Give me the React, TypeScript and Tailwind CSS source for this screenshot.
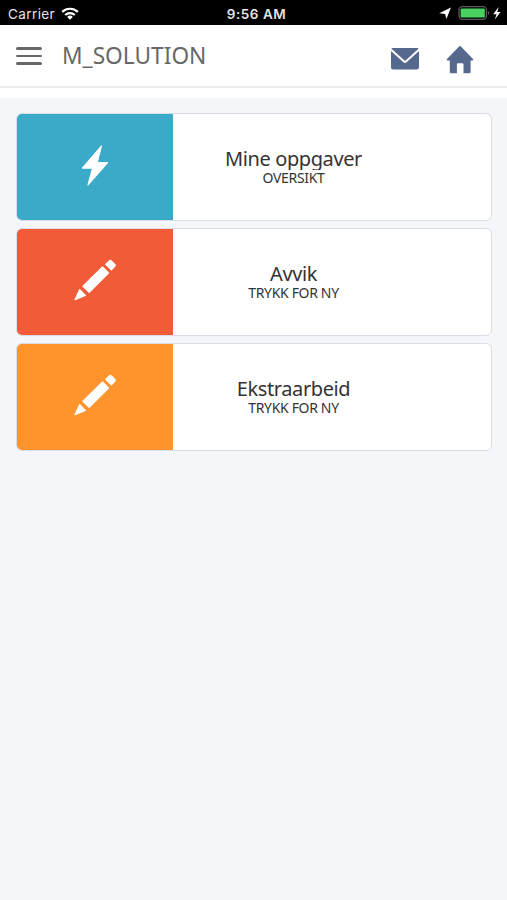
import React from "react";

type Tile = {
  title: string;
  subtitle: string;
  color: string;
  icon: "bolt" | "pencil";
};

const tiles: Tile[] = [
  { title: "Mine oppgaver", subtitle: "OVERSIKT", color: "bg-[#3ba9c8]", icon: "bolt" },
  { title: "Avvik", subtitle: "TRYKK FOR NY", color: "bg-[#f25b38]", icon: "pencil" },
  { title: "Ekstraarbeid", subtitle: "TRYKK FOR NY", color: "bg-[#ff932c]", icon: "pencil" },
];

function BoltIcon() {
  return (
    <svg width="44" height="44" viewBox="0 0 44 44" fill="#fff" stroke="#fff" strokeLinejoin="round" strokeWidth="1.2">
      <path d="M28.4 3.2 9.4 25.1H19.6L15 41.9 34.6 19.6H24.2Z" />
    </svg>
  );
}

function PencilIcon() {
  return (
    <svg width="44" height="44" viewBox="0 0 44 44" fill="#fff" stroke="#fff" strokeLinejoin="round" strokeWidth="1.2">
      <path d="M36.6 2.6Q37.3 2 38 2.6L42 6.6Q42.6 7.4 42 8.1L38.4 11.9 32.7 6.4Z" />
      <path d="M29.5 9 35.5 15 16.2 34.3 10 28.2Z" />
      <path d="M6.7 31.6 12.4 37.4 2 41.7Z" />
    </svg>
  );
}

function StatusBar() {
  return (
    <div className="flex h-[25px] items-center bg-black pt-[3px] text-[#e4e4e4]">
      <div className="flex flex-1 items-center gap-1.5 pl-2">
        <span className="pt-px text-[13.5px] leading-none tracking-[0.4px]">Carrier</span>
        <svg width="18" height="13" viewBox="0 0 18 13" fill="none" stroke="#fff" strokeWidth="2.2" className="-mt-0.5">
          <path d="M1.2 4.9a11.2 11.2 0 0 1 15.6 0" />
          <path d="M4.2 8a7 7 0 0 1 9.6 0" />
          <path d="M6.2 9.9a4.1 4.1 0 0 1 5.6 0L9 12.7Z" fill="#fff" stroke="none" />
        </svg>
      </div>
      <span className="pl-[3px] pt-px text-[13.5px] font-semibold leading-none tracking-[0.55px]">9:56 AM</span>
      <div className="flex flex-1 items-center justify-end pr-[5px]">
        <svg width="64" height="16" viewBox="0 0 64 16" className="-mt-px">
          <path d="M13 1.5 8.4 12.9 7.1 8 1.2 7.3Z" fill="#fff" />
          <rect x="21" y=".7" width="27.5" height="12.6" rx="3.5" fill="none" stroke="#59595d" strokeWidth="1.3" />
          <rect x="22.6" y="2.4" width="24.2" height="9.2" rx="1.2" fill="#48d15f" />
          <path d="M50 5c1.6.6 1.6 3.4 0 4Z" fill="#59595d" />
          <path d="M60.6 1 55.2 8.3H58.6L56.8 13.6 62.6 5.9H59.3Z" fill="#fff" />
        </svg>
      </div>
    </div>
  );
}

function Header() {
  return (
    <header className="flex h-[63px] items-center border-b-2 border-[#e9ebee] bg-white pl-4 pr-[33px]">
      <button aria-label="Menu" className="mt-px flex w-[26px] flex-col gap-[5px]">
        <span className="h-[2.5px] rounded-full bg-[#686868]" />
        <span className="h-[2.5px] rounded-full bg-[#686868]" />
        <span className="h-[2.5px] rounded-full bg-[#686868]" />
      </button>
      <h1 className="ml-5 flex-1 pt-0.5 text-[22.7px] leading-none text-[#686868]">M_SOLUTION</h1>
      <svg width="28" height="22" viewBox="0 0 28 22" fill="#54698d" className="mt-[7px]">
        <path d="M1.5 0H26.5Q27.4 0 27.5.8L14.8 12.2Q14 12.9 13.2 12.2L.5.8Q.6 0 1.5 0Z" />
        <path d="M0 3.1 12.4 14.3Q14 15.6 15.6 14.3L28 3.1V19.3Q28 21.5 25.8 21.5H2.2Q0 21.5 0 19.3Z" />
      </svg>
      <svg width="28" height="28" viewBox="0 0 28 28" fill="#54698d" className="ml-[27px] mt-2">
        <path d="M13.1.5Q14 -.3 14.9.5L27 12.9Q28 14.3 26.4 14.4H24.6V26Q24.6 27.3 23.3 27.3H17.5V18.3Q17.5 17.2 16.4 17.2H12Q10.9 17.2 10.9 18.3V27.3H5.1Q3.8 27.3 3.8 26V14.4H1.6Q0 14.3 1 12.9Z" />
      </svg>
    </header>
  );
}

function TileCard({ tile }: { tile: Tile }) {
  return (
    <button className="flex h-[108px] w-full overflow-hidden rounded-md border border-[#d8dde6] bg-white">
      <div className={`flex h-full w-[156px] items-center justify-center pb-1 ${tile.color}`}>
        {tile.icon === "bolt" ? <BoltIcon /> : <PencilIcon />}
      </div>
      <div className="flex h-full w-[241px] flex-col items-center justify-center pb-[3px] text-[#333]">
        {/* line box is shorter than the glyphs, so descenders get trimmed */}
        <div className="h-6 overflow-hidden whitespace-nowrap text-[20px] leading-[25px] tracking-[-0.4px]">{tile.title}</div>
        <div className="text-[14px] leading-4 tracking-[-0.33px]">{tile.subtitle}</div>
      </div>
    </button>
  );
}

export default function App() {
  return (
    <div className="min-h-[900px] w-[507px] bg-[#f4f6f9] font-['Noto_Sans',sans-serif]">
      <div className="font-['Inter',sans-serif]">
        <StatusBar />
      </div>
      <div className="bg-white pb-2.5">
        <Header />
      </div>
      <main className="flex flex-col gap-[7px] py-[15px] pl-4 pr-[15px]">
        {tiles.map((tile) => (
          <TileCard key={tile.title} tile={tile} />
        ))}
      </main>
    </div>
  );
}
